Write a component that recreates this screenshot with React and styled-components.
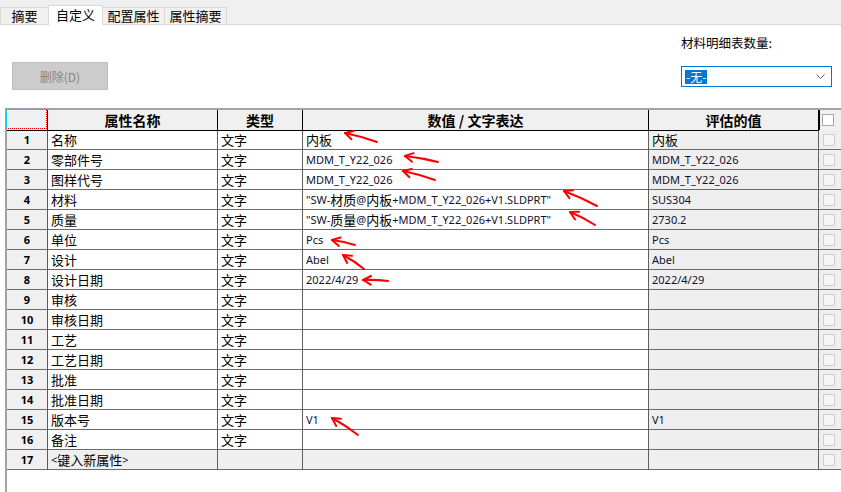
import React from 'react'
import styled, { createGlobalStyle } from 'styled-components'

const GlobalStyle = createGlobalStyle`
  html, body {
    margin: 0;
    padding: 0;
    background: #fff;
  }
  body {
    font-family: "Noto Sans CJK SC", "Noto Sans", sans-serif;
    color: #000;
  }
`

const tabs = [
  { label: '摘要', w: 49 },
  { label: '自定义', w: 55, active: true },
  { label: '配置属性', w: 63 },
  { label: '属性摘要', w: 63 },
]

const rows = [
  { name: '名称', type: '文字', value: '内板', evaluated: '内板' },
  { name: '零部件号', type: '文字', value: 'MDM_T_Y22_026', evaluated: 'MDM_T_Y22_026' },
  { name: '图样代号', type: '文字', value: 'MDM_T_Y22_026', evaluated: 'MDM_T_Y22_026' },
  { name: '材料', type: '文字', value: '"SW-材质@内板+MDM_T_Y22_026+V1.SLDPRT"', evaluated: 'SUS304' },
  { name: '质量', type: '文字', value: '"SW-质量@内板+MDM_T_Y22_026+V1.SLDPRT"', evaluated: '2730.2' },
  { name: '单位', type: '文字', value: 'Pcs', evaluated: 'Pcs' },
  { name: '设计', type: '文字', value: 'Abel', evaluated: 'Abel' },
  { name: '设计日期', type: '文字', value: '2022/4/29', evaluated: '2022/4/29' },
  { name: '审核', type: '文字' },
  { name: '审核日期', type: '文字' },
  { name: '工艺', type: '文字' },
  { name: '工艺日期', type: '文字' },
  { name: '批准', type: '文字' },
  { name: '批准日期', type: '文字' },
  { name: '版本号', type: '文字', value: 'V1', evaluated: 'V1' },
  { name: '备注', type: '文字' },
  { name: '<键入新属性>', isNew: true },
]

// red hand-drawn marks: [headX, headY, tailX, tailY]
const arrows = [
  [345, 133, 377, 142],
  [405, 156, 438, 162],
  [403, 171, 435, 180],
  [564, 191, 597, 206],
  [570, 212, 595, 225],
  [332, 240, 355, 245],
  [343, 255, 364, 269],
  [363, 280, 388, 281],
  [332, 418, 358, 435],
]

function Txt({ children }) {
  if (!children) return null
  const parts = children.split(/([\u3400-\u9fff]+)/)
  return parts.map((p, i) =>
    /[\u3400-\u9fff]/.test(p) ? <Han key={i}>{p}</Han> : <Lat key={i}>{p}</Lat>
  )
}

function Arrow({ a }) {
  const [hx, hy, tx, ty] = a
  const ang = Math.atan2(ty - hy, tx - hx)
  const len = 9
  const b1 = [hx + Math.cos(ang + 0.5) * len, hy + Math.sin(ang + 0.5) * len]
  const b2 = [hx + Math.cos(ang - 0.5) * len, hy + Math.sin(ang - 0.5) * len]
  const mx = (hx + tx) / 2 + 1
  const my = (hy + ty) / 2 - 1
  return (
    <g>
      <path d={`M${tx} ${ty} Q${mx} ${my} ${hx} ${hy}`} />
      <path d={`M${b1[0]} ${b1[1]} L${hx} ${hy} L${b2[0]} ${b2[1]}`} />
    </g>
  )
}

export default function App() {
  return (
    <Window>
      <GlobalStyle />
      <TabStrip>
        {tabs.map((t, i) => (
          <Tab key={t.label} $w={t.w} $active={t.active} $first={i === 0}>
            {t.label}
          </Tab>
        ))}
      </TabStrip>

      <Toolbar>
        <DeleteButton>删除(D)</DeleteButton>
        <QtyGroup>
          <QtyLabel>材料明细表数量:</QtyLabel>
          <Select>
            <Picked>-无-</Picked>
            <Chevron viewBox="0 0 9 5" width="9" height="5">
              <polyline points="0.5,0.5 4.5,4.5 8.5,0.5" />
            </Chevron>
          </Select>
        </QtyGroup>
      </Toolbar>

      <GridFrame>
        <Row>
          <HeadCell $corner />
          <HeadCell>属性名称</HeadCell>
          <HeadCell>类型</HeadCell>
          <HeadCell>数值 / 文字表达</HeadCell>
          <HeadCell>评估的值</HeadCell>
          <HeadCheckCell>
            <Box $head />
          </HeadCheckCell>
        </Row>
        {rows.map((r, i) => (
          <Row key={i}>
            <NumCell>{i + 1}</NumCell>
            <Cell $shade={r.isNew}><Txt>{r.name}</Txt></Cell>
            <Cell $shade={r.isNew}><Txt>{r.type}</Txt></Cell>
            <Cell $shade={r.isNew}><Txt>{r.value}</Txt></Cell>
            <Cell $shade><Txt>{r.evaluated}</Txt></Cell>
            <CheckCell>
              <Box />
            </CheckCell>
          </Row>
        ))}
      </GridFrame>

      <Marks viewBox="0 0 841 492" width="841" height="492">
        {arrows.map((a, i) => <Arrow key={i} a={a} />)}
      </Marks>
    </Window>
  )
}

const Window = styled.div`
  position: relative;
  width: 841px;
  height: 492px;
  overflow: hidden;
  display: flex;
  flex-direction: column;
  background: #fff;
`

const TabStrip = styled.div`
  flex: none;
  height: 25px;
  box-sizing: border-box;
  background: #f0f0f0;
  border-bottom: 1px solid #d9d9d9;
  display: flex;
  align-items: flex-end;
`

const Tab = styled.div`
  position: relative;
  z-index: ${p => (p.$active ? 1 : 0)};
  box-sizing: border-box;
  width: ${p => p.$w}px;
  height: ${p => (p.$active ? 20 : 17)}px;
  margin-bottom: ${p => (p.$active ? -1 : 0)}px;
  margin-left: ${p => (p.$first ? 0 : -1)}px;
  border: 1px solid #d9d9d9;
  border-bottom: none;
  background: ${p => (p.$active ? '#fff' : '#f0f0f0')};
  display: flex;
  align-items: center;
  justify-content: center;
  font-size: 13px;
  line-height: 16px;
  padding-bottom: ${p => (p.$active ? 2 : 0)}px;
`

const Toolbar = styled.div`
  flex: none;
  height: 83px;
  display: flex;
  justify-content: space-between;
  align-items: flex-start;
`

const DeleteButton = styled.div`
  margin: 37px 0 0 12px;
  width: 96px;
  height: 28px;
  box-sizing: border-box;
  background: #cccccc;
  border: 1px solid #bfbfbf;
  color: #858585;
  font-size: 12px;
  display: flex;
  align-items: center;
  justify-content: center;
`

const QtyGroup = styled.div`
  width: 151px;
  margin: 9px 9px 0 0;
  display: flex;
  flex-direction: column;
  gap: 14px;
`

const QtyLabel = styled.div`
  font-size: 12.5px;
  line-height: 18px;
  color: #000;
`

const Select = styled.div`
  height: 21px;
  box-sizing: border-box;
  border: 1px solid #0078d7;
  background: #fff;
  display: flex;
  align-items: center;
  justify-content: space-between;
  padding: 0 6px 0 3px;
`

const Picked = styled.span`
  background: #0078d7;
  color: #fff;
  font-size: 12px;
  line-height: 14px;
  padding: 0 1px;
`

const Chevron = styled.svg`
  fill: none;
  stroke: #5a5a5a;
  stroke-width: 1;
`

const GridFrame = styled.div`
  flex: 1;
  margin-left: 5px;
  border-top: 2px solid #a3a3a3;
  border-left: 2px solid #a3a3a3;
  display: flex;
  flex-direction: column;
`

const Row = styled.div`
  display: grid;
  grid-template-columns: 41px 170px 85px 346px 170px 40px;
  height: 20px;
`

const HeadCell = styled.div`
  position: relative;
  box-sizing: border-box;
  background: #f0f0f0;
  border-right: 1px solid #000;
  border-bottom: 1px solid #000;
  font-size: 14px;
  font-weight: 700;
  display: flex;
  align-items: center;
  justify-content: center;
  white-space: nowrap;

  ${p => p.$corner && `
    &::after {
      content: '';
      position: absolute;
      top: -1px;
      left: -1px;
      right: 0;
      bottom: 1px;
      border-top: 1px dotted #00c8e0;
      border-left: 1px dotted #00c8e0;
      border-right: 1px dotted #ff0000;
      border-bottom: 1px dotted #ff0000;
    }
  `}
`

const HeadCheckCell = styled.div`
  box-sizing: border-box;
  background: #f0f0f0;
  border-left: 2px solid #000;
  margin-left: -1px;
  border-bottom: 1px solid #000;
  display: flex;
  align-items: center;
  padding-left: 2px;
`

const NumCell = styled.div`
  box-sizing: border-box;
  background: #f0f0f0;
  border-right: 1px solid #5a5a5a;
  border-bottom: 1px solid #6d6d6d;
  font-family: "Noto Sans", sans-serif;
  font-size: 11px;
  font-weight: 700;
  display: flex;
  align-items: center;
  justify-content: center;
`

const Cell = styled.div`
  box-sizing: border-box;
  background: ${p => (p.$shade ? '#efefef' : '#fff')};
  border-right: 1px solid #5f5f5f;
  border-bottom: 1px solid #6d6d6d;
  padding-left: 3px;
  display: flex;
  align-items: center;
  white-space: nowrap;
  overflow: hidden;
`

const CheckCell = styled.div`
  box-sizing: border-box;
  background: #efefef;
  border-bottom: 1px solid #6d6d6d;
  display: flex;
  align-items: center;
  padding-left: 4px;
`

const Box = styled.span`
  width: 12px;
  height: 12px;
  box-sizing: border-box;
  border: 1px solid ${p => (p.$head ? '#a8a8a8' : '#cdcdcd')};
  background: ${p => (p.$head ? '#fff' : '#f6f6f6')};
`

const Han = styled.span`
  font-family: "Noto Sans CJK SC", sans-serif;
  font-size: 13px;
  line-height: 17px;
`

const Lat = styled.span`
  font-family: "Noto Sans", "Noto Sans CJK SC", sans-serif;
  font-size: 11px;
  line-height: 17px;
  color: #101030;
`

const Marks = styled.svg`
  position: absolute;
  left: 0;
  top: 0;
  pointer-events: none;
  fill: none;
  stroke: #ff0000;
  stroke-width: 2;
  stroke-linecap: round;
  stroke-linejoin: round;
`
